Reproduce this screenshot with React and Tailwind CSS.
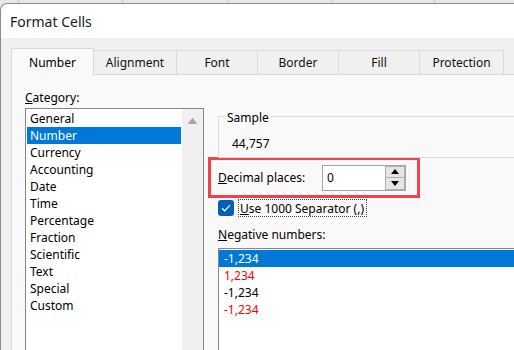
import React from "react";

const categories = [
  "General",
  "Number",
  "Currency",
  "Accounting",
  "Date",
  "Time",
  "Percentage",
  "Fraction",
  "Scientific",
  "Text",
  "Special",
  "Custom",
];

const tabs = [
  { label: "Alignment", w: "w-[83px]" },
  { label: "Font", w: "w-[81px]" },
  { label: "Border", w: "w-[81px]" },
  { label: "Fill", w: "w-[81px]" },
  { label: "Protection", w: "w-[84px]" },
];

const negatives = [
  { text: "-1,234", cls: "bg-[#0078d7] text-white" },
  { text: "1,234", cls: "text-[#ff0000]" },
  { text: "-1,234", cls: "text-black" },
  { text: "-1,234", cls: "text-[#ff0000]" },
];

function Arrow({ up }) {
  return (
    <svg width="8" height="5" viewBox="0 0 8 5">
      <path d={up ? "M0 5 L4 0 L8 5 Z" : "M0 0 L4 5 L8 0 Z"} fill="#000" />
    </svg>
  );
}

export default function App() {
  return (
    <div
      className="w-[514px] h-[350px] overflow-hidden flex flex-col bg-[#e6e6e6] text-[12px] leading-[17px] text-black"
      style={{ fontFamily: '"Noto Sans", "Liberation Sans", sans-serif' }}
    >
      {/* grid of the sheet behind the dialog */}
      <div className="h-[3px] shrink-0 flex">
        <div className="w-[19px] border-r border-[#c8c8c8]" />
        <div className="w-[104px] border-r border-[#c8c8c8]" />
        <div className="w-[105px] border-r border-[#c8c8c8]" />
        <div className="w-[104px] border-r border-[#c8c8c8]" />
        <div className="w-[103px] border-r border-[#c8c8c8]" />
      </div>

      <div className="flex-1 flex flex-col bg-white border-l border-t border-[#8c8c8c] rounded-tl-[7px] overflow-hidden">
        <div className="h-[34px] shrink-0 flex items-center pl-[9px] text-[14px] text-[#1a1a1a]">
          Format Cells
        </div>

        <div className="flex-1 flex flex-col bg-[#f0f0f0] pt-[10px] pl-[10px]">
          {/* tabs */}
          <div className="h-[27px] shrink-0 flex items-end">
            <div className="w-[83px] h-[27px] flex items-center justify-center bg-[#f9f9f9] border-l border-t border-r border-[#d9d9d9]">
              Number
            </div>
            {tabs.map((t) => (
              <div
                key={t.label}
                className={`${t.w} h-[25px] flex items-center justify-center border-t border-r border-b border-[#dadada] bg-[#f0f0f0] text-[#111]`}
              >
                {t.label}
              </div>
            ))}
            <div className="flex-1 h-[1px] bg-[#dadada]" />
          </div>

          {/* tab page */}
          <div className="flex-1 flex bg-[#f9f9f9] border-l border-[#d9d9d9]">
            <div className="pl-[13px] pt-[14px] flex flex-col">
              <div>
                <span className="underline">C</span>ategory:
              </div>
              <div className="mt-[2px] w-[179px] h-[300px] flex border border-[#828790] bg-white">
                <div className="w-[156px] px-[1px] pt-[1px]">
                  {categories.map((c) => (
                    <div
                      key={c}
                      className={`h-[17px] pl-[3px] pt-[1px] leading-[16px] ${c === "Number" ? "bg-[#0078d7] text-white" : ""}`}
                    >
                      {c}
                    </div>
                  ))}
                </div>
                <div className="w-[21px] bg-[#f0f0f0] flex justify-center pt-[9px]">
                  <svg width="9" height="6" viewBox="0 0 9 6">
                    <path d="M0.5 5.5 L4.5 0.5 L8.5 5.5 Z" fill="#a6a6a6" stroke="#a6a6a6" strokeLinejoin="round" />
                  </svg>
                </div>
              </div>
            </div>

            <div className="pl-[14px] flex flex-col">
              {/* Sample group */}
              <div className="relative mt-[41px] w-[400px] h-[42px] border border-[#dcdcdc]">
                <div className="absolute left-[6px] -top-[8px] px-[2px] bg-[#f9f9f9]">Sample</div>
                <div className="pl-[13px] pt-[18px]">44,757</div>
              </div>

              {/* highlighted decimal places row */}
              <div className="-mt-[1px] -ml-[10px] w-[212px] h-[41px] border-[3px] border-[#f0424a] flex items-center pl-[7px]">
                <div className="w-[104px]">
                  <span className="underline">D</span>ecimal places:
                </div>
                <div className="w-[84px] h-[26px] flex border border-[#a3a3a3] bg-white">
                  <div className="flex-1 pl-[4px] flex items-center">0</div>
                  <div className="w-[20px] flex flex-col">
                    <div className="h-[12px] flex items-center justify-center bg-[#e5e5e5] border border-[#b0b0b0]">
                      <Arrow up />
                    </div>
                    <div className="h-[12px] flex items-center justify-center bg-[#e5e5e5] border border-t-0 border-[#b0b0b0]">
                      <Arrow />
                    </div>
                  </div>
                </div>
              </div>

              {/* checkbox */}
              <div className="mt-[1px] flex items-center">
                <div className="w-[16px] h-[16px] rounded-[3px] bg-[#005fb8] flex items-center justify-center">
                  <svg width="10" height="8" viewBox="0 0 10 8">
                    <path d="M1 4.2 L3.7 6.8 L9 1.2" fill="none" stroke="#fff" strokeWidth="1.2" />
                  </svg>
                </div>
                <div className="ml-[4px] h-[18px] pl-[1px] pr-[2px] border border-dotted border-[#444] flex items-center">
                  <span className="underline">U</span>se 1000 Separator (,)
                </div>
              </div>

              <div className="mt-[9px]">
                <span className="underline">N</span>egative numbers:
              </div>

              <div className="mt-[5px] w-[320px] h-[110px] border border-[#828790] bg-white pt-[1px]">
                {negatives.map((n, i) => (
                  <div key={i} className={`h-[17px] pl-[5px] pt-[1px] leading-[16px] ${n.cls}`}>
                    {n.text}
                  </div>
                ))}
              </div>
            </div>
          </div>
        </div>
      </div>
    </div>
  );
}
